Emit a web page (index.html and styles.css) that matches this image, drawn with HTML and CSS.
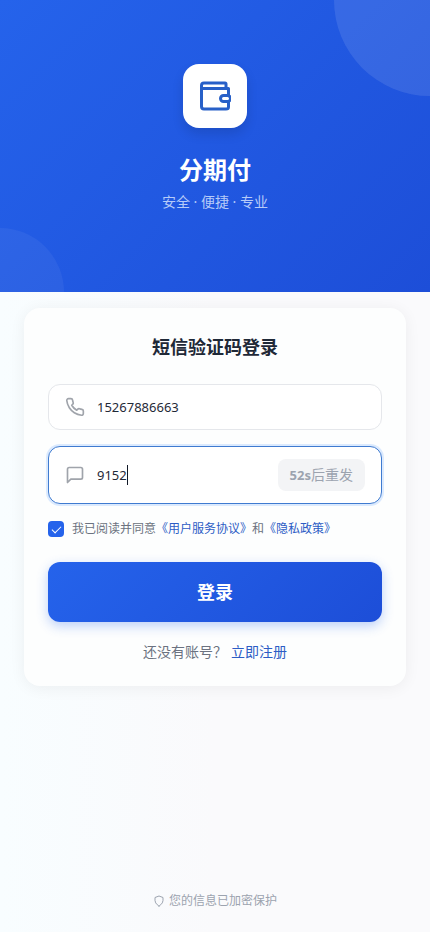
FILE: index.html
```html
<!DOCTYPE html>
<html lang="zh-CN">
<head>
<meta charset="utf-8">
<meta name="viewport" content="width=device-width, initial-scale=1">
<title>分期付</title>
<link rel="stylesheet" href="styles.css">
</head>
<body>
<header class="hero">
  <div class="logo">
    <svg width="32" height="32" viewBox="0 0 32 32" fill="none" stroke="currentColor" stroke-width="3" stroke-linejoin="round" aria-hidden="true">
      <path d="M27 8V4Q27 3 26 3H5Q2.500 3 2.500 5.500V26.500Q2.500 29 5 29H27Q29.500 29 29.500 27V22M29.500 15V8.500H3"/>
      <rect x="21.500" y="15.500" width="10" height="6" rx="3"/>
    </svg>
  </div>
  <h1 class="brand">分期付</h1>
  <p class="tagline">安全 · 便捷 · 专业</p>
</header>
<main class="main">
  <form class="card">
    <h2 class="title">短信验证码登录</h2>
    <div class="field">
      <label class="field-icon" for="phone" aria-label="手机号">
        <svg width="20" height="20" viewBox="0 0 24 24" fill="none" stroke="currentColor" stroke-width="2" stroke-linecap="round" stroke-linejoin="round" aria-hidden="true"><path d="M22 16.920v3a2 2 0 0 1-2.180 2 19.790 19.790 0 0 1-8.630-3.070 19.500 19.500 0 0 1-6-6 19.790 19.790 0 0 1-3.070-8.670A2 2 0 0 1 4.110 2h3a2 2 0 0 1 2 1.720 12.840 12.840 0 0 0 .7 2.810 2 2 0 0 1-.45 2.110L8.090 9.910a16 16 0 0 0 6 6l1.270-1.270a2 2 0 0 1 2.110-.45 12.840 12.840 0 0 0 2.810.7A2 2 0 0 1 22 16.920z"/></svg>
      </label>
      <input class="input" id="phone" type="tel" value="15267886663">
    </div>
    <div class="field field-active">
      <label class="field-icon" for="code" aria-label="验证码">
        <svg width="20" height="20" viewBox="0 0 24 24" fill="none" stroke="currentColor" stroke-width="2" stroke-linecap="round" stroke-linejoin="round" aria-hidden="true"><path d="M21 15a2 2 0 0 1-2 2H7l-4 4V5a2 2 0 0 1 2-2h14a2 2 0 0 1 2 2z"/></svg>
      </label>
      <input class="input input-code" id="code" type="text" inputmode="numeric" value="9152">
      <button class="resend" type="button" disabled><b>52s</b>后重发</button>
    </div>
    <div class="agree">
      <input class="check" id="agree" type="checkbox" checked>
      <label for="agree">我已阅读并同意</label><a href="#terms">《用户服务协议》</a><span>和</span><a href="#privacy">《隐私政策》</a>
    </div>
    <button class="submit" type="submit">登录</button>
    <p class="register">还没有账号？<a href="#register">立即注册</a></p>
  </form>
</main>
<footer class="footer">
  <svg width="12" height="12" viewBox="0 0 24 24" fill="none" stroke="currentColor" stroke-width="2" stroke-linecap="round" stroke-linejoin="round" aria-hidden="true"><path d="M12 22s8-4 8-11V5l-8-3-8 3v6c0 7 8 11 8 11z"/></svg>
  <span>您的信息已加密保护</span>
</footer>
</body>
</html>
```
FILE: styles.css
```css
* {
  box-sizing: border-box;
}

body {
  margin: 0;
  min-height: 100vh;
  display: flex;
  flex-direction: column;
  font-family: "Noto Sans", "Noto Sans CJK SC", sans-serif;
  font-size: 14px;
  line-height: 20px;
  color: #1f2937;
  background: linear-gradient(90deg, #f8fdff, #fafafc 50%, #fafafc);
}

h1, h2, p {
  margin: 0;
}

a {
  color: #2c5cc5;
  text-decoration: none;
}

button, input {
  font: inherit;
}

.hero {
  position: relative;
  overflow: hidden;
  display: flex;
  flex-direction: column;
  align-items: center;
  padding: 64px 24px 80px;
  color: #fff;
  background: linear-gradient(135deg, #2563eb, #1d4ed8);
}

.hero::before,
.hero::after {
  content: "";
  position: absolute;
  border-radius: 50%;
}

.hero::before {
  top: -96px;
  right: -96px;
  width: 192px;
  height: 192px;
  background: rgba(255, 255, 255, 0.1);
}

.hero::after {
  bottom: -64px;
  left: -64px;
  width: 128px;
  height: 128px;
  background: rgba(255, 255, 255, 0.05);
}

.logo {
  display: grid;
  place-items: center;
  width: 64px;
  height: 64px;
  margin-bottom: 24px;
  border-radius: 16px;
  color: #2860c8;
  background: #fff;
  box-shadow: 0 6px 12px rgba(0, 0, 0, 0.12);
}

.brand {
  font-size: 24px;
  line-height: 36px;
  font-weight: 700;
  margin-bottom: 4px;
}

.tagline {
  color: #b6cbf8;
}

.main {
  padding: 16px 24px;
}

.card {
  padding: 24px;
  border-radius: 16px;
  background: #fdfefe;
  box-shadow: 0 2px 16px rgba(0, 0, 0, 0.06);
}

.title {
  margin-bottom: 22px;
  font-size: 18px;
  line-height: 30px;
  font-weight: 700;
  text-align: center;
}

.field {
  display: flex;
  align-items: center;
  gap: 12px;
  min-height: 46px;
  margin-bottom: 16px;
  padding: 0 16px;
  border: 1px solid #e5e7eb;
  border-radius: 12px;
  background: #fff;
}

.field-active {
  min-height: 58px;
  border-color: #3f7bd0;
  box-shadow: 0 0 0 2px #dbeafe;
}

.field-icon {
  display: flex;
  color: #a0a4ab;
}

.input {
  flex: 1;
  min-width: 0;
  height: 20px;
  padding: 0;
  border: 0;
  outline: 0;
  font-size: 13px;
  color: #1f2937;
  background: none;
}

.input-code {
  background: linear-gradient(#111827, #111827) 30px 0 / 1px 20px no-repeat;
}

.resend {
  height: 32px;
  padding: 0 12px;
  border: 0;
  border-radius: 8px;
  color: #9ca3af;
  background: #f3f4f6;
}

.resend b {
  font-size: 13px;
}

.agree {
  display: flex;
  align-items: center;
  margin-bottom: 24px;
  font-size: 12px;
  line-height: 18px;
  color: #6b7280;
}

.check {
  appearance: none;
  width: 16px;
  height: 16px;
  margin: 0 8px 0 0;
  border-radius: 4px;
  background: #2563eb;
  display: grid;
  place-items: center;
}

.check:checked::after {
  content: "";
  width: 8px;
  height: 4px;
  margin-bottom: 2px;
  border: solid #fff;
  border-width: 0 0 1px 1px;
  transform: rotate(-45deg);
}

.submit {
  display: block;
  width: 100%;
  height: 60px;
  margin-bottom: 20px;
  border: 0;
  border-radius: 12px;
  font-size: 18px;
  font-weight: 700;
  color: #fff;
  background: linear-gradient(135deg, #2563eb, #1d4ed8);
  box-shadow: 0 4px 12px rgba(37, 99, 235, 0.3);
}

.register {
  text-align: center;
  color: #6b7280;
}

.register a {
  margin-left: 4px;
}

.footer {
  display: flex;
  align-items: center;
  justify-content: center;
  gap: 4px;
  margin-top: auto;
  padding-bottom: 21px;
  font-size: 12px;
  color: #9ca3af;
}
```
